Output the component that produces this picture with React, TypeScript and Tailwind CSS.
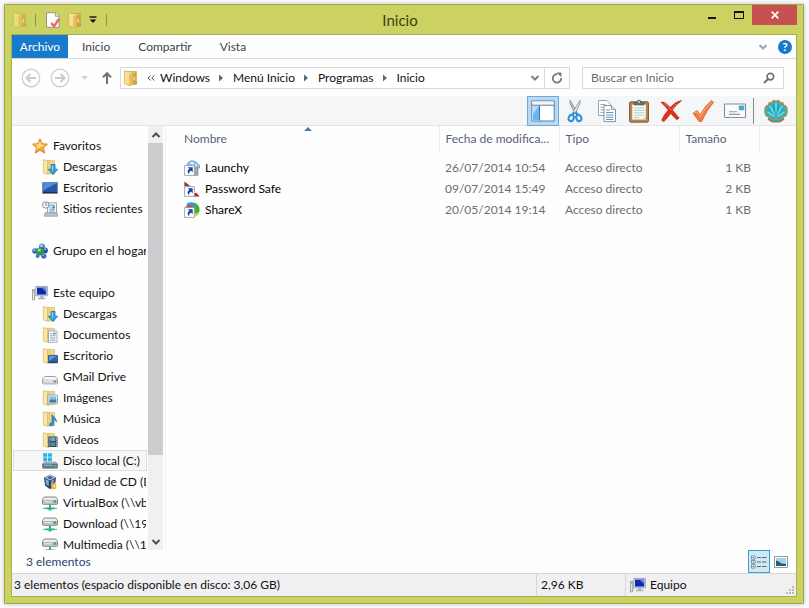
import React, { useState } from "react";

type IconProps = { className?: string };

const FolderBase = () => (
  <>
    <path d="M4 1.4h8.600v13.200H4z" fill="#efd588" stroke="#d3b25a" strokeWidth=".6" />
    <path d="M1.300.7 7 1.800v13.800L1.300 14z" fill="#f9e6ac" stroke="#d6b65f" strokeWidth=".7" />
    <path d="M5.600 2.400v12.600" stroke="#dfc06a" strokeWidth="1.200" />
  </>
);

const FolderIcon = ({ className = "size-4" }: IconProps) => (
  <svg viewBox="0 0 16 16" className={className}>
    <path d="M6 1.500h7.600v12.800H6z" fill="#e9c763" stroke="#c39d37" strokeWidth=".6" />
    <path d="M9.400 3.400 13 2.200v12l-3.600 1z" fill="#d2a63c" />
    <path d="M11.200 6.800v3.600" stroke="#fff3c4" />
    <path d="M1.400.8 9.400 2v12.800l-3.400.8-4.600-1.800z" fill="#f6df94" stroke="#d0ab46" strokeWidth=".7" />
    <path d="M6.200 4.200 9.400 3v12l-3.200.7z" fill="#e2bf57" />
    <path d="M13.200 11.200v2.600" stroke="#5b9bd0" />
  </svg>
);

const DownloadsIcon = () => (
  <svg viewBox="0 0 16 16" className="size-4 shrink-0">
    <FolderBase />
    <path d="M9.200 5.500h3.800v4.800h2.700L11 15.700l-4.700-5.400h2.900z" fill="#35a3e0" stroke="#1673b5" strokeWidth=".8" />
    <path d="M10.400 6.500v5" stroke="#9bdcf8" />
  </svg>
);

const DocumentsIcon = () => (
  <svg viewBox="0 0 16 16" className="size-4 shrink-0">
    <FolderBase />
    <path d="M6.500 4h8.500v11.300H6.500z" fill="#fff" stroke="#8f9ca9" strokeWidth=".8" />
    <path d="M8 6.500h2M8 8.800h5.600M8 11h5.600M8 13.200h5.600" stroke="#6f96bd" strokeWidth=".9" />
    <path d="M11 5.700h2.700v1.700H11z" fill="#4c8ac8" />
  </svg>
);

const DesktopFolderIcon = () => (
  <svg viewBox="0 0 16 16" className="size-4 shrink-0">
    <FolderBase />
    <path d="M6.500 7.500h9v7.300h-9z" fill="#2c65b8" stroke="#45566c" strokeWidth=".9" />
    <path d="M7 8h8l-8 5z" fill="#5a97de" />
    <path d="M7 14.200h8" stroke="#1b3a6d" strokeWidth="1.200" />
  </svg>
);

const PicturesIcon = () => (
  <svg viewBox="0 0 16 16" className="size-4 shrink-0">
    <FolderBase />
    <path d="M6 5h9.500v8.800H6z" fill="#fff" stroke="#8193a3" strokeWidth=".8" />
    <path d="M7.300 6.300h7v6.200h-7z" fill="#7cc1ee" />
    <path d="m7.300 11 2.500-2 2 1.400 2.500-1.600v3.700h-7z" fill="#3b7d8c" />
  </svg>
);

const MusicIcon = () => (
  <svg viewBox="0 0 16 16" className="size-4 shrink-0">
    <FolderBase />
    <path d="M10 3.800c1 2.600 4.700 2.600 4.400 7.200-.8-2.200-1.800-2.500-2.800-2.800v4.700c0 2.200-3.900 3-4.100.9-.1-1.500 1.300-2.100 2.500-1.900z" fill="#2b95d8" stroke="#1568a5" strokeWidth=".6" />
  </svg>
);

const VideosIcon = () => (
  <svg viewBox="0 0 16 16" className="size-4 shrink-0">
    <FolderBase />
    <path d="M6.200 4.500h9.300V15H6.200z" fill="#303a42" />
    <path d="M8.200 5.200h5.300v4H8.200z" fill="#63a6cf" />
    <path d="M8.200 10.200h5.300v4H8.200z" fill="#4b8c9b" />
    <path d="M7.200 5.300v9.500M14.500 5.300v9.500" stroke="#e4e9ec" strokeDasharray="1 1" />
  </svg>
);

const StarIcon = () => (
  <svg viewBox="0 0 16 16" className="size-4 shrink-0">
    <path d="m8 .8 2.100 4.900 5.300.5-4 3.600 1.200 5.200L8 12.300 3.400 15l1.200-5.200-4-3.600 5.300-.5z" fill="#fba932" stroke="#d9791b" strokeWidth=".9" strokeLinejoin="round" />
    <path d="m8 2.800 1.400 3.700 3.800.4-3.400 1.600L8 9.500 4.400 11l1-3.200-2.700-1.200 3.800-.2z" fill="#ffe08a" />
  </svg>
);

const MonitorIcon = () => (
  <svg viewBox="0 0 16 16" className="size-4 shrink-0">
    <path d="M.6 2.500h14.800v11H.6z" fill="#2459a8" stroke="#7c8b9c" strokeWidth="1" />
    <path d="M1.200 3.100h13.600L1.200 10.500z" fill="#4d8ddb" />
    <path d="M1.200 12.400h13.600" stroke="#1a2f57" strokeWidth="1.200" />
  </svg>
);

const RecentIcon = () => (
  <svg viewBox="0 0 16 16" className="size-4 shrink-0">
    <path d="M5.500 1.800h9v10.200h-9z" fill="#f4f8fb" stroke="#8c9daa" strokeWidth=".9" />
    <path d="M7.400 4.200h5.200M7.400 6.200h2M7.400 8.200h5.200M7.400 10h5.200" stroke="#5b9ac9" />
    <path d="M10.400 5.200h2.600v2.200h-2.600z" fill="#3e84bf" />
    <path d="M3 11.800h12l.6 3.400H2.400z" fill="#bcc3c8" stroke="#858e95" strokeWidth=".7" />
    <circle cx="3.800" cy="4" r="3.200" fill="#f8f8f8" stroke="#858b90" strokeWidth="1" />
    <path d="M3.800 2v2.200h1.600" stroke="#66707a" strokeWidth=".8" fill="none" />
  </svg>
);

const HomegroupIcon = () => (
  <svg viewBox="0 0 16 16" className="size-4 shrink-0">
    <circle cx="10" cy="3.600" r="3" fill="#4d86d6" />
    <circle cx="2.900" cy="8" r="2.700" fill="#2f60c4" />
    <circle cx="12.900" cy="7.600" r="3" fill="#2650ad" />
    <circle cx="8" cy="8.600" r="4" fill="#34983f" />
    <circle cx="11.800" cy="13" r="2.600" fill="#3467c8" />
    <circle cx="5.600" cy="13" r="2" fill="#3f76cf" />
    <circle cx="7.200" cy="7" r="1.600" fill="#9fe29c" />
    <circle cx="2.300" cy="7.200" r="1" fill="#b5d2f8" />
    <circle cx="13.200" cy="6.200" r="1" fill="#a5c5f3" />
    <circle cx="9.500" cy="2.600" r="1.200" fill="#d5e6fb" />
    <circle cx="11.300" cy="12.200" r=".8" fill="#b5d2f8" />
  </svg>
);

const ComputerIcon = () => (
  <svg viewBox="0 0 16 16" className="size-4 shrink-0">
    <path d="M.5 4.500h2.200v10.300H.5z" fill="#e3e6e8" stroke="#858d94" strokeWidth=".8" />
    <path d="M1.100 6.200h1" stroke="#5cae4e" />
    <path d="M3.700 1.400h11.700v9.400H3.700z" fill="#dde2e7" stroke="#8d98a4" strokeWidth=".8" />
    <path d="M5 2.600h9.200v7H5z" fill="#1425b0" />
    <path d="M9.500 2.600h4.700v4.400z" fill="#5d90ee" />
    <path d="M8.200 11h3v1.800h2.200v1.400H6v-1.400h2.200z" fill="#a9b1b8" />
  </svg>
);

const DriveIcon = () => (
  <svg viewBox="0 0 16 16" className="size-4 shrink-0">
    <path d="M2.800 7.500h10.400l2.300 2.700v3.800q0 .9-1 .9h-13q-1 0-1-.9v-3.800z" fill="#f6f7f7" stroke="#85898d" strokeWidth=".8" />
    <path d="M.9 10.700h14.200v3.600H.9z" fill="#c9ccce" />
    <path d="M2 12.400h8.500" stroke="#f1f2f2" />
    <path d="M11.900 11.700h1.900v1.600h-1.900z" fill="#46913a" />
  </svg>
);

const SystemDriveIcon = () => (
  <svg viewBox="0 0 16 16" className="size-4 shrink-0">
    <path d="M1.200.2h3.900v3.600H1.200zM5.900.2h4v3.600h-4zM1.200 4.600h3.900v3.600H1.200zM5.900 4.600h4v3.600h-4z" fill="#21b5e8" />
    <path d="M2.600 9h11l2 2.200H.5z" fill="#b8c2c9" stroke="#69757d" strokeWidth=".5" />
    <path d="M.5 11h15v3.400q0 .9-.9.9H1.400q-.9 0-.9-.9z" fill="#5d7f92" stroke="#4c5d69" strokeWidth=".5" />
    <path d="M2 12.200h8.500" stroke="#9fb9c7" />
    <path d="M12.200 12.200h1.800v1.600h-1.800z" fill="#59d34a" />
  </svg>
);

const VirtualBoxIcon = () => (
  <svg viewBox="0 0 16 16" className="size-4 shrink-0">
    <path d="m8 .8 6 2.600-1 8.200L8 15.200l-5-3.600-1-8.200z" fill="#25456f" />
    <path d="m8 .8 6 2.600-6 3-6-3z" fill="#9fb8d3" />
    <path d="m3.400 5 3.400 1.800v5.400l-2.900-2zM12.600 5 9.200 6.800v5.400l1-.6z" fill="#86a6c8" />
    <path d="m8 2.200 3 1.200-3 1.500-3-1.500z" fill="#37587f" />
    <path d="m9 10 2.600-.6 1-1.400 1.200 1.600.8 5.200-5 .6z" fill="#f2b53c" />
    <path d="m10.600 11.600 2.400-.4v2.200z" fill="#fff1c0" />
  </svg>
);

const NetDriveIcon = () => (
  <svg viewBox="0 0 16 16" className="size-4 shrink-0">
    <path d="M2.300 2h11.400l1.800 2.400v4q0 .9-.9.9H1.400q-.9 0-.9-.9v-4z" fill="#eceded" stroke="#74797d" strokeWidth=".9" />
    <path d="M1 5h14v3.800H1z" fill="#b4b8bb" />
    <path d="M2 6.800h8" stroke="#f1f2f3" />
    <path d="M12 5.200h1.800v2.600H12z" fill="#4d9e3c" />
    <path d="M7 9.700h2v2.700h3.500v1.800H9.500v1.300h-3v-1.300h-3v-1.800H7z" fill="#28b981" />
    <path d="M1 13.400h14" stroke="#28b981" strokeWidth=".9" />
  </svg>
);

const ShortcutMark = () => (
  <>
    <path d="M.6 5.600h9.800v9.800H.6z" fill="#fff" stroke="#8b96a5" strokeWidth=".8" />
    <path d="M3.700 7.200h5v5L7 10.600q-2.200 1.200-2 3.600-3-3 .4-5.400z" fill="#17449b" />
  </>
);

const LaunchyIcon = () => (
  <svg viewBox="0 0 16 16" className="size-4 shrink-0">
    <path d="M10 8h4v7.400h-4z" fill="#a8abad" stroke="#7d8386" strokeWidth=".6" />
    <path d="M3 5.200Q3.500 1.200 8.500.7l3.500 1.100 3.600 3.400.2 2.800-3-.6-2.200.8L8 6z" fill="#8fc0db" stroke="#5f93b3" strokeWidth=".7" />
    <path d="M5.500 2.800q2.400-1.600 4.500-.4L8.800 5zM11.400 3.600l2.200 2-2.200.6z" fill="#e2f3fb" />
    <ShortcutMark />
  </svg>
);

const PasswordSafeIcon = () => (
  <svg viewBox="0 0 16 16" className="size-4 shrink-0">
    <path d="M.4.4 7 5.600H.4z" fill="#8f3a3a" />
    <path d="M9 12h3.500l3.200 3.600H9z" fill="#c01d24" />
    <path d="M5 4.800 10.400 9" stroke="#c9cdd2" strokeWidth="1.200" />
    <ShortcutMark />
  </svg>
);

const ShareXIcon = () => (
  <svg viewBox="0 0 16 16" className="size-4 shrink-0">
    <path d="M3 1.600Q8-1.200 12.400 1.800L12 6H2z" fill="#3f8fe0" />
    <path d="M9 .8q6.400.6 6.600 7 0 4-3.600 6.200H9.500L11 4z" fill="#35b53a" />
    <path d="M15 10q-1.600 5-6.600 5.400l1-4.400q3.500.6 5.600-1z" fill="#f3cb2d" />
    <path d="M.9 6.800Q1.400 4 4.800 3.600 9 3.200 10.800 7z" fill="#de4340" />
    <ShortcutMark />
  </svg>
);

const CheckDocIcon = () => (
  <svg viewBox="0 0 16 16" className="size-4">
    <path d="M1.500.7h9l3.600 3.600v11H1.500z" fill="#fdfdfd" stroke="#8d8d80" strokeWidth=".9" />
    <path d="M10.500.7v3.600h3.600" fill="#e4e4e0" stroke="#8d8d80" strokeWidth=".8" />
    <path d="m6.200 11 2.800 3.200 5-7.400" fill="none" stroke="#ec6a52" strokeWidth="2.400" />
  </svg>
);

const PaneIcon = () => (
  <svg viewBox="0 0 24 22" className="h-[22px] w-6">
    <path d="M.8 1h22.400v20H.8z" fill="#fff" stroke="#5f7d9a" />
    <path d="M1.300 1.500h21.400v3.200H1.300z" fill="#f4f6f8" />
    <path d="M.8 5.200h22.400" stroke="#5f7d9a" />
    <path d="M2 6.200h6v13.800H2z" fill="#69b5f3" />
    <path d="M2 6.200h6L2 14z" fill="#b5dcfb" />
    <path d="M8.500 5.500v15" stroke="#3c7ab5" />
  </svg>
);

const ScissorsIcon = () => (
  <svg viewBox="0 0 24 24" className="size-6">
    <path d="M7 1.200q-.6 2.400 1 5.400l4 8 1.800-2.200z" fill="#b9c6d0" stroke="#71828f" strokeWidth=".7" />
    <path d="M17 1.200q.6 2.400-1 5.400l-4 8-1.800-2.200z" fill="#dfe7ec" stroke="#71828f" strokeWidth=".7" />
    <path d="m11 13.500-2 3M13 13.500l2 3" stroke="#1879c0" strokeWidth="2.200" />
    <ellipse cx="8.200" cy="19" rx="2.500" ry="3.200" transform="rotate(20 8.200 19)" fill="none" stroke="#2a93dc" strokeWidth="2.100" />
    <ellipse cx="15.800" cy="19" rx="2.500" ry="3.200" transform="rotate(-20 15.800 19)" fill="none" stroke="#2a93dc" strokeWidth="2.100" />
  </svg>
);

const CopyIcon = () => (
  <svg viewBox="0 0 24 24" className="size-6">
    <path d="M3.500 1.500h8.200l3.800 3.800v11.200h-12z" fill="#fff" stroke="#8e9aa5" strokeWidth=".9" />
    <path d="M5.500 5.500h5M5.500 8.200h4M5.500 10.800h4M5.500 13.400h4" stroke="#93a8ba" />
    <path d="M9 6.500h7.400l4.100 4.100v12H9z" fill="#fff" stroke="#7c8996" strokeWidth=".9" />
    <path d="M16.400 6.500v4.100h4.100" fill="#dfe5ea" stroke="#7c8996" strokeWidth=".8" />
    <path d="M11 11h4M11 13.500h7.400M11 16h7.400M11 18.300h7.400M11 20.500h7.400" stroke="#5f98c9" />
  </svg>
);

const PasteIcon = () => (
  <svg viewBox="0 0 24 24" className="size-6">
    <rect x="2.500" y="2.800" width="19" height="20.400" rx="1.400" fill="#b9824a" stroke="#7b5229" strokeWidth=".9" />
    <path d="M5 5.200h14v15.600H5z" fill="#fcfcf8" stroke="#a3906f" strokeWidth=".5" />
    <path d="M6.600 9h10.800M6.600 11.400h10.800M6.600 13.800h10.800M6.600 16.200h10.800M6.600 18.600h6" stroke="#a9c5c0" strokeWidth=".9" />
    <path d="m19 16.500-4.500 4.300H19z" fill="#d2d2c8" />
    <path d="M7 6V3.800h2.800Q10 1 12 1t2.200 2.800H17V6z" fill="#6d747a" stroke="#454b50" strokeWidth=".6" />
    <circle cx="12" cy="2.900" r=".9" fill="#e9ecef" />
  </svg>
);

const DeleteIcon = () => (
  <svg viewBox="0 0 24 24" className="size-6">
    <path d="M2 3.200q4-1 9.200 5.400Q16 2.600 22.600 1.600 17.400 5.500 13.400 11q3.200 4 6.800 8l-2.400 1.800q-3-2.800-6-6.400Q8.600 18.600 5 22.600L2.600 21.200Q5 15.600 9.200 11 5.800 6.800 2 3.200z" fill="#e0301e" stroke="#a81b10" strokeWidth=".6" />
    <path d="M5 4.200q4 2 6.500 6.400M17.500 4.800 12.500 10.800" stroke="#f5806c" fill="none" strokeWidth=".9" />
  </svg>
);

const PropertiesIcon = () => (
  <svg viewBox="0 0 24 24" className="size-6">
    <path d="m2 14.200 4-2.600 3.500 4Q13.500 7 20.600 1.400l2 2Q15.500 11 10.800 22.400H8z" fill="#f37b3e" stroke="#cc5826" strokeWidth=".7" />
    <path d="m3.400 14 2.300-1.200 3.700 4.800Q14 8.200 20.600 3" stroke="#fbb48a" fill="none" />
  </svg>
);

const RenameIcon = () => (
  <svg viewBox="0 0 24 24" className="size-6">
    <rect x="1.500" y="5" width="21" height="13.500" rx=".6" fill="#fbfbfc" stroke="#848e98" strokeWidth="1.100" />
    <path d="M16.200 7h4.600v3.800h-4.600z" fill="#3fb0cf" stroke="#2c87a6" strokeWidth=".6" />
    <path d="M6 12.800h8M6 15.400h11" stroke="#8e99a4" strokeWidth="1.100" />
  </svg>
);

const ShellIcon = () => (
  <svg viewBox="0 0 24 24" className="size-6">
    <path d="M6.500 16h11l2.500 4.500-4 2.500H8l-4-2.500z" fill="#4ba7a0" stroke="#96602a" strokeWidth=".8" />
    <path d="M8.500 20 1.800 16.500Q-.6 10 2.600 6.600L4 6.800 5.400 3.600l1.800.4L9.600 1.400l2.400.8 2.400-.8L16.800 4l1.800-.4L20 6.800l1.400-.2q3.200 3.400.8 9.900L15.500 20z" fill="#2ab4c4" stroke="#c98240" strokeWidth="1.200" strokeLinejoin="round" />
    <path d="M10.500 17.500 3.600 13M11 16.500 5.800 7M12 16V4M13 16.500 18.200 7M13.500 17.500l6.900-4.500" stroke="#84e2e8" strokeWidth="1.300" />
    <path d="M10.800 17 4.200 9.800M11.500 16 9 4.500M12.500 16 15 4.500M13.200 17l6.600-7.200" stroke="#1a93a4" strokeWidth=".8" />
  </svg>
);

const ChevronDown = ({ className = "" }: IconProps) => (
  <svg viewBox="0 0 10 10" className={`size-[10px] ${className}`}>
    <path d="m1.500 3 3.500 3.500L8.500 3" fill="none" stroke="currentColor" strokeWidth="2" />
  </svg>
);

const CrumbArrow = () => (
  <svg viewBox="0 0 6 8" className="h-2 w-[6px] text-[#666]">
    <path d="M1 0.500 5 4 1 7.500z" fill="currentColor" />
  </svg>
);

const sidebar = [
  { label: "Favoritos", icon: <StarIcon />, root: true },
  { label: "Descargas", icon: <DownloadsIcon /> },
  { label: "Escritorio", icon: <MonitorIcon /> },
  { label: "Sitios recientes", icon: <RecentIcon /> },
  null,
  { label: "Grupo en el hogar", icon: <HomegroupIcon />, root: true },
  null,
  { label: "Este equipo", icon: <ComputerIcon />, root: true },
  { label: "Descargas", icon: <DownloadsIcon /> },
  { label: "Documentos", icon: <DocumentsIcon /> },
  { label: "Escritorio", icon: <DesktopFolderIcon /> },
  { label: "GMail Drive", icon: <DriveIcon /> },
  { label: "Imágenes", icon: <PicturesIcon /> },
  { label: "Música", icon: <MusicIcon /> },
  { label: "Vídeos", icon: <VideosIcon /> },
  { label: "Disco local (C:)", icon: <SystemDriveIcon />, selected: true },
  { label: "Unidad de CD (D", icon: <VirtualBoxIcon /> },
  { label: "VirtualBox (\\\\vb", icon: <NetDriveIcon /> },
  { label: "Download (\\\\19.", icon: <NetDriveIcon /> },
  { label: "Multimedia (\\\\1", icon: <NetDriveIcon /> },
];

const files = [
  { name: "Launchy", icon: <LaunchyIcon />, date: "26/07/2014 10:54", type: "Acceso directo", size: "1 KB" },
  { name: "Password Safe", icon: <PasswordSafeIcon />, date: "09/07/2014 15:49", type: "Acceso directo", size: "2 KB" },
  { name: "ShareX", icon: <ShareXIcon />, date: "20/05/2014 19:14", type: "Acceso directo", size: "1 KB" },
];

const tools = [
  { label: "Cortar", icon: <ScissorsIcon /> },
  { label: "Copiar", icon: <CopyIcon /> },
  { label: "Pegar", icon: <PasteIcon /> },
  { label: "Eliminar", icon: <DeleteIcon /> },
  { label: "Propiedades", icon: <PropertiesIcon /> },
  { label: "Cambiar nombre", icon: <RenameIcon /> },
];

const crumbs = ["Windows", "Menú Inicio", "Programas", "Inicio"];

const TitleBar = () => (
  <header className="relative flex h-[29px] shrink-0 items-center">
    <div className="flex items-center">
      <FolderIcon className="ml-[7px] size-4 opacity-70" />
      <div className="ml-[7px] h-3 w-px bg-[#8c9145]" />
      <button aria-label="Propiedades" className="ml-[9px]">
        <CheckDocIcon />
      </button>
      <button aria-label="Nueva carpeta" className="ml-[6px]">
        <FolderIcon />
      </button>
      <button aria-label="Personalizar" className="ml-[6px]">
        <svg viewBox="0 0 8 8" className="size-2">
          <path d="M.5 1h7" stroke="#111" strokeWidth="1.400" />
          <path d="M.8 3.600h6.400L4 7z" fill="#111" />
        </svg>
      </button>
      <div className="ml-[9px] h-3 w-px bg-[#8c9145]" />
    </div>
    <h1 className="pointer-events-none absolute inset-x-0 pr-2 text-center text-[15px] leading-5 text-[#3e400f]">Inicio</h1>
    <div className="ml-auto flex h-5 self-start pr-[6px]">
      <button aria-label="Minimizar" className="flex w-[27px] justify-center pt-3">
        <span className="h-[2px] w-2 bg-[#111]" />
      </button>
      <button aria-label="Maximizar" className="flex w-[27px] justify-center pt-[6px]">
        <span className="h-2 w-[10px] border border-t-2 border-[#111]" />
      </button>
      <button aria-label="Cerrar" className="flex w-[45px] items-center justify-center bg-[#c75050]">
        <svg viewBox="0 0 8 8" className="size-2">
          <path d="m.7.7 6.600 6.600M7.300.7.7 7.300" stroke="#fff" strokeWidth="1.700" />
        </svg>
      </button>
    </div>
  </header>
);

const Ribbon = () => (
  <nav className="flex h-6 shrink-0 items-center border-b border-[#dadbdc] text-[#444]">
    <button className="h-full w-14 bg-[#1979ca] text-white">Archivo</button>
    <button className="ml-[14px]">Inicio</button>
    <button className="ml-7">Compartir</button>
    <button className="ml-7">Vista</button>
    <button aria-label="Expandir la cinta" className="ml-auto text-[#a0a4a9]">
      <ChevronDown />
    </button>
    <button aria-label="Ayuda" className="mr-1 ml-[10px] size-[14px] rounded-full bg-[#1979ca] text-[12px] leading-[14px] font-bold text-white">
      ?
    </button>
  </nav>
);

const AddressBar = () => (
  <div className="flex h-[37px] shrink-0 items-center pr-3">
    <button aria-label="Atrás" className="ml-[9px]">
      <svg viewBox="0 0 20 20" className="size-5 text-[#c9cbce]">
        <circle cx="10" cy="10" r="8.800" fill="none" stroke="currentColor" strokeWidth="1.200" />
        <path d="M15 10H6M9.500 6 5.500 10l4 4" fill="none" stroke="currentColor" strokeWidth="2" />
      </svg>
    </button>
    <button aria-label="Adelante" className="ml-[9px]">
      <svg viewBox="0 0 20 20" className="size-5 text-[#c9cbce]">
        <circle cx="10" cy="10" r="8.800" fill="none" stroke="currentColor" strokeWidth="1.200" />
        <path d="M5 10h9M10.500 6l4 4-4 4" fill="none" stroke="currentColor" strokeWidth="2" />
      </svg>
    </button>
    <button aria-label="Ubicaciones recientes" className="ml-[11px]">
      <svg viewBox="0 0 7 4" className="h-1 w-[7px]">
        <path d="M0 0h7L3.500 4z" fill="#d2d4d6" />
      </svg>
    </button>
    <button aria-label="Subir" className="ml-[13px]">
      <svg viewBox="0 0 12 14" className="h-[14px] w-3 text-[#707070]">
        <path d="M6 13V2M2 6.300 6 2.200l4 4.100" fill="none" stroke="currentColor" strokeWidth="2" />
      </svg>
    </button>
    <div className="ml-[7px] flex h-[22px] min-w-0 flex-1 items-center border border-[#d9d9d9] bg-white">
      <FolderIcon className="ml-[2px] size-4 shrink-0" />
      <button aria-label="Carpetas anteriores" className="ml-1 flex w-4 justify-center">
        <svg viewBox="0 0 8 6" className="h-[6px] w-2">
          <path d="M3.600.5 1 3l2.600 2.500M7.400.5 4.800 3l2.600 2.500" fill="none" stroke="#555" strokeWidth="1" />
        </svg>
      </button>
      <div className="flex items-center pl-px">
        {crumbs.map((crumb, i) => (
          <React.Fragment key={crumb}>
            {i > 0 && (
              <span className="flex w-[23px] justify-center">
                <CrumbArrow />
              </span>
            )}
            <button className="whitespace-nowrap">{crumb}</button>
          </React.Fragment>
        ))}
      </div>
      <button aria-label="Historial" className="ml-auto pr-1 text-[#808080]">
        <ChevronDown />
      </button>
      <button aria-label="Actualizar" className="flex h-full w-[25px] items-center justify-center border-l border-[#d9d9d9]">
        <svg viewBox="0 0 12 12" className="size-3 text-[#757575]">
          <path d="M6.500 2.200A4.200 4.200 0 1 0 10.200 6" fill="none" stroke="currentColor" strokeWidth="1.700" />
          <path d="M5.600.4h4.800v4.800z" fill="currentColor" />
        </svg>
      </button>
    </div>
    <label className="ml-3 flex h-[22px] w-[202px] shrink-0 items-center border border-[#d9d9d9] bg-white pr-2 pl-2">
      <input aria-label="Buscar" placeholder="Buscar en Inicio" className="min-w-0 flex-1 outline-none placeholder:text-[#6d6d6d]" />
      <svg viewBox="0 0 12 12" className="size-3 text-[#707070]">
        <circle cx="7.400" cy="4.600" r="3.300" fill="none" stroke="currentColor" strokeWidth="1.700" />
        <path d="M5 7 1 11" stroke="currentColor" strokeWidth="2" />
      </svg>
    </label>
  </div>
);

const Toolbar = () => (
  <div className="flex h-[30px] shrink-0 items-center justify-end border-b border-[#e4e5ea] bg-[#f5f6f7] pr-1">
    <button aria-label="Panel de navegación" className="flex h-[30px] w-8 items-center justify-center self-start border border-[#6fa8dc] bg-[#b5d9f6]">
      <PaneIcon />
    </button>
    {tools.map((tool) => (
      <button key={tool.label} aria-label={tool.label} className="flex w-8 justify-center">
        {tool.icon}
      </button>
    ))}
    <div className="mx-[2px] h-[26px] w-px bg-[#8a8a8a]" />
    <button aria-label="Classic Shell" className="ml-1 flex w-8 justify-center">
      <ShellIcon />
    </button>
  </div>
);

const Sidebar = () => (
  <aside className="flex w-[154px] shrink-0 border-r border-[#f0f1f5]">
    <div className="min-w-0 flex-1 overflow-hidden pt-[9px] pr-px pl-px">
      {sidebar.map((item, i) =>
        item ? (
          <a
            key={i}
            href="#"
            className={`flex h-[21px] items-center gap-[5px] overflow-hidden border whitespace-nowrap ${
              item.root ? "pl-[18px]" : "pl-7"
            } ${item.selected ? "border-[#dedede] bg-[#f7f7f7]" : "border-transparent"}`}
          >
            {item.icon}
            <span>{item.label}</span>
          </a>
        ) : (
          <div key={i} className="h-[21px]" />
        )
      )}
    </div>
    <div className="mr-[2px] flex w-[15px] flex-col items-center bg-[#f0f0f0] text-[#505050]">
      <button aria-label="Desplazar hacia arriba" className="flex h-[17px] items-center">
        <ChevronDown className="rotate-180" />
      </button>
      <div className="w-full flex-[4] bg-[#cdcbcd]" />
      <div className="w-full flex-1" />
      <button aria-label="Desplazar hacia abajo" className="flex h-[17px] items-center">
        <ChevronDown />
      </button>
    </div>
  </aside>
);

const FileTable = () => (
  <main className="min-w-0 flex-1">
    <table className="w-full table-fixed text-left">
      <colgroup>
        <col className="w-[273px]" />
        <col className="w-[120px]" />
        <col className="w-[120px]" />
        <col className="w-20" />
        <col />
      </colgroup>
      <thead className="text-[#56617c]">
        <tr className="h-[26px] [&>th]:border-r [&>th]:border-[#e8eaf0] [&>th]:font-normal [&>th:last-child]:border-0">
          <th className="relative pl-[18px]">
            Nombre
            <svg viewBox="0 0 8 4" className="absolute top-[1px] left-[138px] h-1 w-2">
              <path d="M4 0 8 4H0z" fill="#57789e" />
            </svg>
          </th>
          <th className="pl-[6px] whitespace-nowrap">Fecha de modifica...</th>
          <th className="pl-[6px]">Tipo</th>
          <th className="pl-[6px]">Tamaño</th>
          <th />
        </tr>
      </thead>
      <tbody className="text-[#6d6d6d] before:block before:h-[5px]">
        {files.map((file) => (
          <tr key={file.name} className="h-[21px]">
            <td className="pl-[18px]">
              <a href="#" className="flex items-center gap-[5px] text-black">
                {file.icon}
                {file.name}
              </a>
            </td>
            <td className="pl-[6px]">{file.date}</td>
            <td className="pl-[6px]">{file.type}</td>
            <td className="pr-2 text-right">{file.size}</td>
            <td />
          </tr>
        ))}
      </tbody>
    </table>
  </main>
);

const Footer = ({ view, setView }: { view: string; setView: (view: string) => void }) => (
  <footer className="shrink-0">
    <div className="flex h-[23px] items-center pr-1 pl-[14px] text-[#2b4272]">
      <span>3 elementos</span>
      <button
        aria-label="Detalles"
        onClick={() => setView("details")}
        className={`ml-auto flex h-[23px] w-[22px] items-center justify-center border ${
          view === "details" ? "border-[#35a2c9] bg-[#cdeaf7]" : "border-transparent"
        }`}
      >
        <svg viewBox="0 0 16 14" className="h-[14px] w-4 shrink-0">
          <path d="M.5.9h3.600v3.200H.5zM.5 5.400h3.600v3.200H.5zM.5 9.900h3.600v3.200H.5z" fill="#fff" stroke="#6c7880" strokeWidth=".8" />
          <path d="M1.600 2.500h1.400M1.600 7h1.400M1.600 11.500h1.400" stroke="#3a6da3" />
          <path d="M6 2.500h4M11 2.500h4.500M6 7h4M11 7h4.500M6 11.500h4M11 11.500h4.500" stroke="#5a656c" />
        </svg>
      </button>
      <button
        aria-label="Iconos grandes"
        onClick={() => setView("icons")}
        className={`flex h-[23px] w-[22px] items-center justify-center border ${
          view === "icons" ? "border-[#35a2c9] bg-[#cdeaf7]" : "border-transparent"
        }`}
      >
        <svg viewBox="0 0 14 12" className="h-3 w-[14px]">
          <path d="M.5.5h13v11H.5z" fill="#fff" stroke="#8d9ba5" />
          <path d="M2 2h10v8H2z" fill="#a5d3ee" />
          <path d="M2 4.500q3 .4 5.500 3l4.500.4V10H2z" fill="#235f74" />
        </svg>
      </button>
    </div>
    <div className="flex h-[23px] items-center border-t border-[#d7d7d7] bg-[#f0eff1]">
      <span className="flex-1 pl-[2px]">3 elementos (espacio disponible en disco: 3,06 GB)</span>
      <span className="flex h-full w-[89px] items-center border-l border-[#d7d7d7] pl-1">2,96 KB</span>
      <span className="flex h-full w-[171px] items-center gap-1 border-l border-[#d7d7d7] pl-1">
        <ComputerIcon />
        Equipo
        <svg viewBox="0 0 8 8" className="mr-[2px] mb-[2px] ml-auto size-2 self-end">
          <path d="M6 0h2v2H6zM3 3h2v2H3zM6 3h2v2H6zM0 6h2v2H0zM3 6h2v2H3zM6 6h2v2H6z" fill="#b9b9b9" />
        </svg>
      </span>
    </div>
  </footer>
);

export default function App() {
  const [view, setView] = useState("details");

  return (
    <div className="flex h-screen flex-col bg-[#fbfbfb] py-1 pr-[5px] pl-1 font-['Lato','Open_Sans',sans-serif] text-[12px] leading-4 text-[#111]">
      <div className="flex min-h-0 flex-1 flex-col border border-[#a3a852] bg-[#ccd262] shadow-[0_0_4px_#bbb]">
        <TitleBar />
        <div className="mx-[6px] mb-[6px] flex min-h-0 flex-1 flex-col border border-[#a9ae52] bg-[#fefefe]">
          <Ribbon />
          <AddressBar />
          <Toolbar />
          <div className="flex min-h-0 flex-1">
            <Sidebar />
            <FileTable />
          </div>
          <Footer view={view} setView={setView} />
        </div>
      </div>
    </div>
  );
}
